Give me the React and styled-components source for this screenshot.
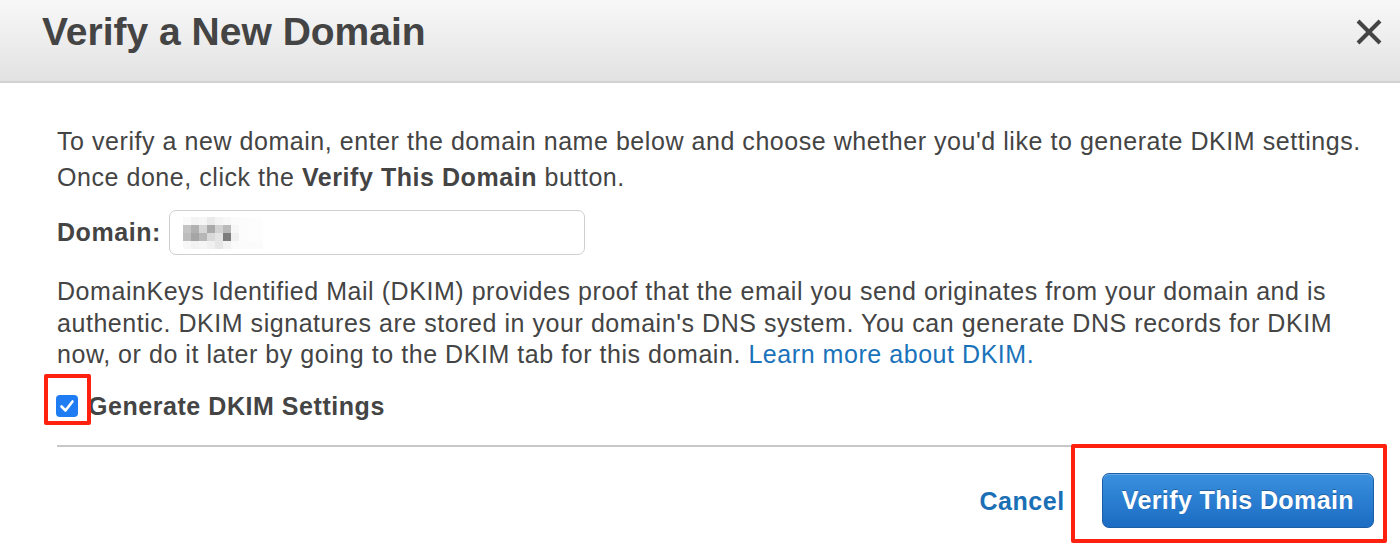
import styled, { createGlobalStyle } from 'styled-components';

const GlobalStyle = createGlobalStyle`
  html, body {
    margin: 0;
    background: #fff;
  }
  body {
    font-family: "Liberation Sans", Arial, sans-serif;
    color: #444;
  }
`;

const Dialog = styled.div`
  width: 1400px;
  height: 551px;
  overflow: hidden;
  background: #fff;
`;

const Header = styled.div`
  height: 81px;
  display: flex;
  align-items: center;
  justify-content: space-between;
  padding: 0 17px 0 42px;
  background: linear-gradient(#f8f8f8, #e2e2e2);
  border-bottom: 2px solid #d2d2d2;
`;

const Title = styled.h1`
  margin: 0 0 18px;
  font-size: 39px;
  font-weight: 700;
  color: #444;
`;

const Close = styled.button`
  border: none;
  background: none;
  padding: 0;
  width: 28px;
  height: 28px;
  margin-bottom: 18px;
  cursor: pointer;
`;

const Body = styled.div`
  padding: 40px 30px 0 57px;
  letter-spacing: 0.55px;
`;

const Text = styled.p`
  margin: 0;
  font-size: 25px;
  line-height: ${props => props.$lh || '36px'};
`;

const Link = styled.a`
  color: #1a73ba;
  text-decoration: none;
`;

const Row = styled.div`
  display: flex;
  align-items: center;
  margin: ${props => props.$m || '0'};
`;

const Label = styled.label`
  font-size: 25px;
  font-weight: 700;
  margin-right: 8px;
`;

const Input = styled.div`
  box-sizing: border-box;
  width: 416px;
  height: 45px;
  border: 1px solid #cfcfcf;
  border-radius: 7px;
  display: flex;
  align-items: center;
  padding-left: 13px;
`;

const Pixels = styled.div`
  display: grid;
  grid-template-columns: repeat(10, 8px);
  grid-auto-rows: 8px;
`;

const Pixel = styled.span`
  background: ${props => props.$c};
`;

const Marked = styled.div`
  position: relative;
  display: flex;
  align-items: center;
`;

const Highlight = styled.span`
  position: absolute;
  top: ${props => props.$t}px;
  left: ${props => props.$l}px;
  right: ${props => props.$r}px;
  bottom: ${props => props.$b}px;
  border: 4px solid #ff2010;
  border-radius: 2px;
  pointer-events: none;
`;

const Check = styled.span`
  width: 22px;
  height: 22px;
  border-radius: 4px;
  background: #1f7cf2;
  display: flex;
  align-items: center;
  justify-content: center;
`;

const CheckLabel = styled.span`
  font-size: 25px;
  font-weight: 700;
  margin-left: 10px;
`;

const Divider = styled.hr`
  margin: 24px 30px 0 0;
  border: none;
  border-top: 2px solid #c8c8c8;
`;

const Footer = styled.div`
  display: flex;
  justify-content: flex-end;
  align-items: center;
  gap: 37px;
  padding-top: 26px;
  margin-right: -4px;
`;

const Cancel = styled.a`
  font-size: 25px;
  font-weight: 700;
  color: #1a6fb5;
  margin-top: 3px;
`;

const Primary = styled.button`
  height: 55px;
  padding: 0 19px;
  font-family: "Liberation Sans", Arial, sans-serif;
  font-size: 25px;
  font-weight: 700;
  letter-spacing: 0.4px;
  color: #fff;
  background: linear-gradient(#3a90de, #1b6cc3);
  border: 1px solid #1b5ea6;
  border-radius: 7px;
  text-shadow: 0 -1px 0 rgba(0, 0, 0, 0.25);
  box-shadow: inset 0 1px 0 rgba(255, 255, 255, 0.25);
`;

const pixelRows = [
  ['#fafafa', '#f3f3f3', '#f6f6f6', '#eaeaea', '#f4f4f4', '#f7f7f7', '#fbfbfb', '#fcfcfc', '#fdfdfd', '#fdfdfd'],
  ['#c4c4c4', '#b0b0b0', '#d6d6d6', '#aaaaaa', '#d2d2d2', '#b9b9b9', '#f7f7f7', '#fcfcfc', '#fdfdfd', '#fdfdfd'],
  ['#bdbdbd', '#a5a5a5', '#b7b7b7', '#d9d9d9', '#e4e4e4', '#7d7d7d', '#f0f0f0', '#fcfcfc', '#fdfdfd', '#fdfdfd'],
  ['#f7f7f7', '#f2f2f2', '#f5f5f5', '#f0f0f0', '#e6e6e6', '#f2f2f2', '#fafafa', '#fbfbfb', '#fbfbfb', '#fbfbfb'],
];

export default function App() {
  return (
    <Dialog>
      <GlobalStyle />
      <Header>
        <Title>Verify a New Domain</Title>
        <Close aria-label="Close">
          <svg width="28" height="28" viewBox="0 0 28 28">
            <path d="M3 3 L25 25 M25 3 L3 25" stroke="#444" strokeWidth="4" />
          </svg>
        </Close>
      </Header>
      <Body>
        <Text>
          To verify a new domain, enter the domain name below and choose whether you'd like to generate DKIM settings.
          <br />
          Once done, click the <b>Verify This Domain</b> button.
        </Text>
        <Row $m="15px 0 21px">
          <Label>Domain:</Label>
          <Input>
            <Pixels>
              {pixelRows.flat().map((c, i) => <Pixel key={i} $c={c} />)}
            </Pixels>
          </Input>
        </Row>
        <Text $lh="31.5px">
          DomainKeys Identified Mail (DKIM) provides proof that the email you send originates from your domain and is authentic. DKIM signatures are stored in your domain's DNS system. You can generate DNS records for DKIM now, or do it later by going to the DKIM tab for this domain. <Link href="#">Learn more about DKIM.</Link>
        </Text>
        <Row $m="21px 0 0 -1px">
          <Marked>
            <Check>
              <svg width="18" height="18" viewBox="0 0 18 18">
                <path d="M3.5 9.5 L7.5 13.5 L14.5 4.5" fill="none" stroke="#fff" strokeWidth="2.6" strokeLinecap="round" strokeLinejoin="round" />
              </svg>
            </Check>
            <Highlight $t={-21} $l={-12} $r={-13} $b={-8} />
          </Marked>
          <CheckLabel>Generate DKIM Settings</CheckLabel>
        </Row>
        <Divider />
        <Footer>
          <Cancel>Cancel</Cancel>
          <Marked>
            <Primary>Verify This Domain</Primary>
            <Highlight $t={-29} $l={-31} $r={-13} $b={-15} />
          </Marked>
        </Footer>
      </Body>
    </Dialog>
  );
}
